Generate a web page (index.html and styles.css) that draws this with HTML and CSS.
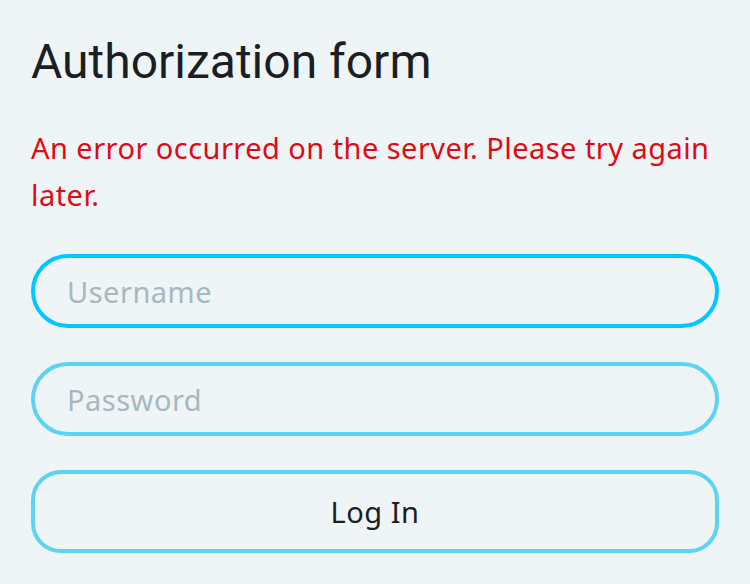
FILE: index.html
```html
<!DOCTYPE html>
<html lang="en">
<head>
<meta charset="utf-8">
<title>Authorization form</title>
<link rel="stylesheet" href="styles.css">
</head>
<body>
<main class="page">
  <h1 class="title">Authorization form</h1>
  <p class="error">An error occurred on the server. Please try again later.</p>
  <form class="form">
    <input class="field field-focus" type="text" placeholder="Username">
    <input class="field" type="password" placeholder="Password">
    <button class="submit" type="button">Log In</button>
  </form>
</main>
</body>
</html>
```
FILE: styles.css
```css
html, body {
  margin: 0;
  padding: 0;
  background: #eff4f7;
}
.page {
  padding: 28px 31px 0;
  font-family: "Noto Sans", sans-serif;
}
.title {
  margin: 0;
  font-family: Roboto, sans-serif;
  font-weight: 400;
  font-size: 48px;
  line-height: 68px;
  color: #1a1f23;
}
.error {
  margin: 28px 0 0;
  font-size: 29px;
  line-height: 47px;
  letter-spacing: 0.45px;
  color: #e00a12;
}
.form {
  display: flex;
  flex-direction: column;
  gap: 34px;
  margin-top: 36px;
}
.field {
  box-sizing: border-box;
  height: 74px;
  width: 100%;
  margin: 0;
  padding: 0 32px;
  border: 4px solid #5dd3f3;
  border-radius: 37px;
  background: transparent;
  font-family: "Noto Sans", sans-serif;
  font-size: 29px;
  letter-spacing: 0.5px;
  color: #1a1f23;
  outline: none;
}
.field-focus {
  border-color: #00c8ff;
}
.field::placeholder {
  color: #a9b8bd;
}
.submit {
  box-sizing: border-box;
  height: 83px;
  width: 100%;
  margin: 0;
  border: 4px solid #5dd3f3;
  border-radius: 30px;
  background: transparent;
  font-family: "Noto Sans", sans-serif;
  font-size: 29px;
  letter-spacing: 0.5px;
  color: #1a1f23;
}
```
